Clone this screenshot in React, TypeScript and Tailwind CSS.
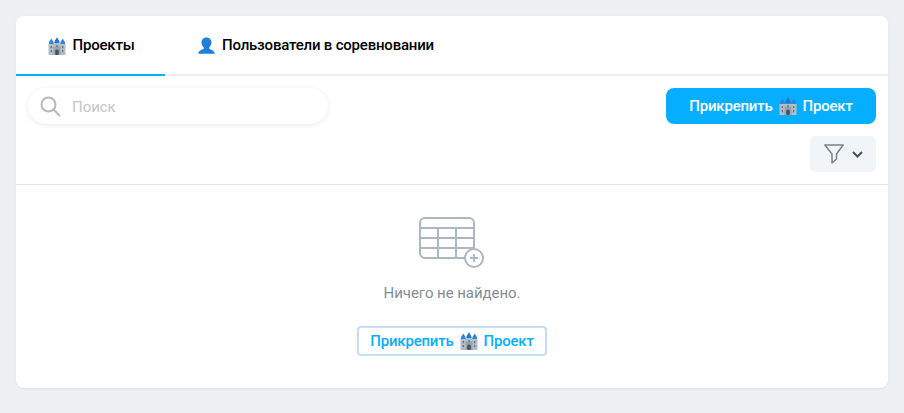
import React from "react";

function Castle({ size = 18 }: { size?: number }) {
  return (
    <svg width={size} height={size} viewBox="0 0 18 18" className="shrink-0">
      <rect x="0.500" y="7" width="17" height="11" fill="#b3bfc6" />
      <rect x="5.500" y="9.500" width="7" height="8.500" fill="#96a4ac" />
      <path d="M3.300 1.500 C3.800 3 5.800 4 5.800 7 H.8 C.8 4 2.800 3 3.300 1.500 Z" fill="#2f86dc" />
      <path d="M9 0 C9.500 2 11.700 3 11.700 6.500 H6.300 C6.300 3 8.500 2 9 0 Z" fill="#2678cc" />
      <path d="M14.700 1.500 C15.200 3 17.200 4 17.200 7 H12.200 C12.200 4 14.200 3 14.700 1.500 Z" fill="#2f86dc" />
      <rect x="7.200" y="12.500" width="3.600" height="5.500" rx="1.600" fill="#46545c" />
      <rect x="2.700" y="9" width="1.200" height="2.200" fill="#5c6a72" />
      <rect x="14.100" y="9" width="1.200" height="2.200" fill="#5c6a72" />
      <rect x="8.400" y="8" width="1.200" height="2.200" fill="#5c6a72" />
      <rect x="2.700" y="13" width="1.200" height="2.200" fill="#5c6a72" />
      <rect x="14.100" y="13" width="1.200" height="2.200" fill="#5c6a72" />
    </svg>
  );
}

function Bust() {
  return (
    <svg width="18" height="18" viewBox="0 0 18 18" className="shrink-0">
      <path d="M8.500.5c3.200 0 5 2.300 5 5 0 2.100-1 3.900-2.300 4.900v1.300c1.600 1 4.900 1.700 5.500 4.200.1.500-.2.900-.8.900H1.100c-.6 0-.9-.4-.8-.9.6-2.500 3.900-3.200 5.500-4.200v-1.300C4.500 9.400 3.500 7.600 3.500 5.500c0-2.700 1.800-5 5-5z" fill="#1f7fdb" />
    </svg>
  );
}

export default function App() {
  return (
    <div className="h-[413px] w-[904px] overflow-hidden bg-[#edf0f3] px-4 pt-4 font-['Roboto',sans-serif]">
      <div className="flex h-[372px] w-[872px] flex-col rounded-lg bg-white shadow-[0_1px_3px_rgba(0,0,0,0.06)]">
        <div className="flex h-[60px] shrink-0 border-b-2 border-[#edf0f3]">
          <div className="-mb-[2px] flex h-[60px] w-[149px] items-center justify-center gap-[6px] border-b-2 border-[#05aeff] pl-[2px] pt-[1px] text-[15px] font-medium tracking-[-0.2px] text-black">
            <Castle />
            <span>Проекты</span>
          </div>
          <div className="ml-[33px] flex items-center gap-[6px] pt-[1px] text-[15px] font-medium tracking-[-0.2px] text-black">
            <Bust />
            <span>Пользователи в соревновании</span>
          </div>
        </div>
        <div className="flex h-[109px] shrink-0 justify-between border-b border-[#e4e6ec] pl-3 pr-3">
          <div className="mt-[12px] flex h-[36px] w-[300px] items-center rounded-[18px] bg-white pl-[12px] shadow-[0_1px_5px_rgba(0,0,0,0.09)]">
            <svg width="22" height="22" viewBox="0 0 22 22" fill="none" stroke="#b4b9c0" strokeWidth="2">
              <circle cx="8.500" cy="9.500" r="7" />
              <path d="M13.500 14.500 L19.500 20.500" strokeLinecap="round" />
            </svg>
            <span className="ml-[10px] pt-[3px] text-[15px] tracking-[-0.05px] text-[#c3c6cc]">Поиск</span>
          </div>
          <div className="flex flex-col items-end">
            <div className="mt-[12px] flex h-[36px] w-[210px] items-center justify-center gap-[6px] rounded-lg bg-[#05aeff] text-[15px] font-medium tracking-[-0.2px] text-white">
              <span>Прикрепить</span>
              <Castle />
              <span>Проект</span>
            </div>
            <div className="mt-[12px] flex h-[36px] w-[66px] items-center justify-center gap-[8px] rounded-[5px] bg-[#f2f5f8]">
              <svg width="20" height="20" viewBox="0 0 20 20" fill="none" stroke="#7b8189" strokeWidth="1.500" strokeLinejoin="round">
                <path d="M.8 1h18.400L12.500 10v5L8 19v-9z" />
              </svg>
              <svg width="11" height="7" viewBox="0 0 11 7" fill="none" stroke="#454f66" strokeWidth="2">
                <path d="M1 1 L5.500 5.500 L10 1" />
              </svg>
            </div>
          </div>
        </div>
        <div className="flex flex-1 flex-col items-center pt-[32px]">
          <svg width="66" height="52" viewBox="0 0 66 52" fill="none" stroke="#abb8c3" strokeWidth="2">
            <rect x="1" y="1" width="54" height="40" rx="5" />
            <path d="M1 11h54M1 21h54M1 31h54M19 11v30M37 11v30" />
            <circle cx="55" cy="41" r="9" fill="#fff" />
            <path d="M51 41h8M55 37v8" strokeWidth="1.800" />
          </svg>
          <div className="mt-[14px] text-[15px] leading-5 tracking-[-0.05px] text-[#858c94]">Ничего не найдено.</div>
          <div className="mt-[23px] flex h-[30px] w-[190px] items-center justify-center gap-[6px] rounded-[4px] border-2 border-[#c3def5] text-[15px] font-medium tracking-[-0.2px] text-[#05aeff]">
            <span>Прикрепить</span>
            <Castle />
            <span>Проект</span>
          </div>
        </div>
      </div>
    </div>
  );
}
